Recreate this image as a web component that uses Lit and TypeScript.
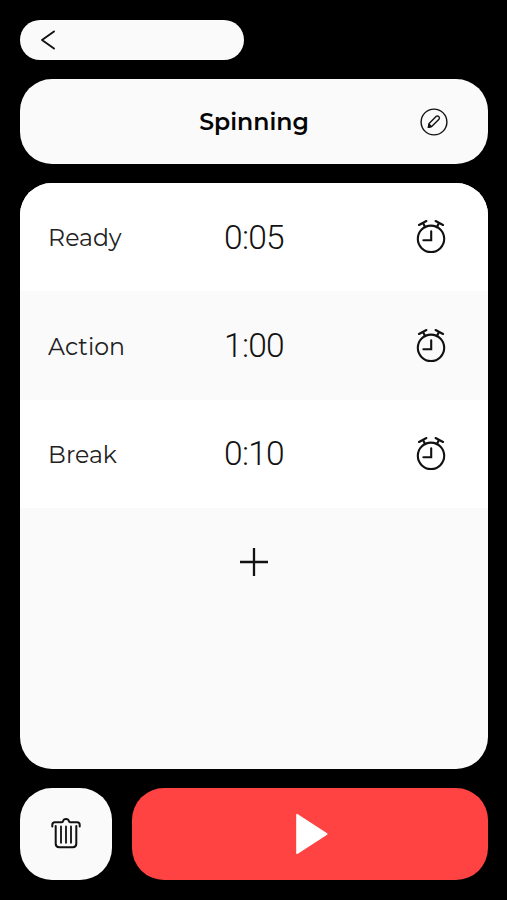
import { LitElement, html, css, svg } from "lit";
import { customElement, property } from "lit/decorators.js";

interface Step {
  name: string;
  time: string;
}

const steps: Step[] = [
  { name: "Ready", time: "0:05" },
  { name: "Action", time: "1:00" },
  { name: "Break", time: "0:10" },
];

const icons: Record<string, { w: number; h: number; body: unknown }> = {
  back: {
    w: 16, h: 22,
    body: svg`<path d="M14 2.4 2 11 14 19.6" stroke-width="1.9"/>`,
  },
  edit: {
    w: 28, h: 28,
    body: svg`<circle cx="14" cy="14" r="12.9" stroke-width="1.4"/>
      <path d="M8.4 19.3 9.1 15.5 16.3 8.3Q17.5 7.4 18.7 8.6 20 9.9 19 11.2L11.9 18.3Z" stroke-width="1.4"/>
      <path d="M8.4 19.3 9.1 16.3 11.4 18.5Z" stroke-width="1.4" fill="currentColor"/>`,
  },
  alarm: {
    w: 30, h: 36,
    body: svg`<circle cx="15" cy="20.8" r="13.2" stroke-width="2.1"/>
      <path d="M15.2 13.2V22.2H7.4" stroke-width="2.1" stroke-linejoin="miter"/>
      <path d="M3 6.9 10.4 3.1M7 5.1 9.1 9M27 6.9 19.6 3.1M23 5.1 20.9 9" stroke-width="2.2"/>`,
  },
  plus: {
    w: 28, h: 28,
    body: svg`<path d="M14 0V28M0 14H28" stroke-width="2.3" stroke-linecap="butt"/>`,
  },
  trash: {
    w: 30, h: 32,
    body: svg`<path d="M1.3 9.6V7.7Q1.3 5.2 3.8 5.2H10.9Q11.8 5.2 12 4.2 12.6 2 15 2T18 4.2Q18.2 5.2 19.1 5.2H26.2Q28.7 5.2 28.7 7.7V9.6" stroke-width="2"/>
      <path d="M4.7 9V26.8Q4.7 30.2 8.2 30.2H21.8Q25.3 30.2 25.3 26.8V9" stroke-width="2"/>
      <path d="M10 9.5V25.8M15 9.5V25.8M20 9.5V25.8" stroke-width="1.8"/>`,
  },
  play: {
    w: 34, h: 42,
    body: svg`<path d="M2 1.7V40.3L31.7 21Z" fill="currentColor" stroke-width="1.6"/>`,
  },
};

@customElement("line-icon")
export class LineIcon extends LitElement {
  @property() name = "back";

  static styles = css`
    :host { display: block; flex: none; }
    .glyph {
      display: block;
      fill: none;
      stroke: currentColor;
      stroke-linecap: round;
      stroke-linejoin: round;
    }
  `;

  render() {
    const icon = icons[this.name];
    return html`<svg class="glyph" width=${icon.w} height=${icon.h}
      viewBox="0 0 ${icon.w} ${icon.h}">${icon.body}</svg>`;
  }
}

@customElement("app-root")
export class AppRoot extends LitElement {
  static styles = css`
    :host {
      display: flex;
      flex-direction: column;
      gap: 18.8px;
      box-sizing: border-box;
      width: 100%;
      height: 900px;
      padding: 19.5px 18.6px 20px 19.6px;
      background: #000;
      color: #111;
      font-family: Montserrat, Inter, sans-serif;
    }
    button {
      appearance: none;
      border: 0;
      margin: 0;
      padding: 0;
      color: inherit;
      font: inherit;
      background: #fafafa;
    }
    .back {
      display: flex;
      align-items: center;
      width: 224.4px;
      height: 40.7px;
      padding-left: 20.4px;
      border-radius: 21px;
    }
    .title {
      display: grid;
      grid-template-columns: 1fr auto 1fr;
      align-items: center;
      height: 85.4px;
      box-sizing: border-box;
      padding: 0 40.4px;
      border-radius: 32px;
      background: #fafafa;
    }
    .heading {
      grid-column: 2;
      margin: 0;
      font-size: 23.6px;
      font-weight: 600;
      line-height: 29px;
      color: #050505;
    }
    .edit {
      justify-self: end;
      background: none;
    }
    .steps {
      flex: 1;
      overflow: hidden;
      border-radius: 32px;
      background: #fafafa;
    }
    .step {
      display: grid;
      grid-template-columns: 1fr auto 1fr;
      align-items: center;
      height: 108.2px;
      box-sizing: border-box;
      padding: 0 42.5px 0 28.5px;
      background: #fff;
    }
    .step:nth-child(even) { background: #fafafa; }
    .name {
      padding-top: 1.4px;
      font-size: 23.6px;
      font-weight: 400;
      color: #222;
    }
    .time {
      font-family: Roboto, sans-serif;
      font-size: 33.5px;
      font-weight: 300;
      letter-spacing: -0.7px;
      margin-left: 14px;
    }
    .step line-icon {
      justify-self: end;
      margin-bottom: 1.6px;
    }
    .add {
      display: grid;
      place-items: center;
      width: 100%;
      height: 108px;
    }
    .actions {
      display: flex;
      gap: 20.3px;
      height: 92px;
    }
    .action {
      display: grid;
      place-items: center;
      border-radius: 32px;
    }
    .remove { width: 92px; }
    .remove line-icon { margin-bottom: 2px; }
    .start {
      flex: 1;
      padding-left: 4px;
      background: #ff4343;
      color: #fff;
    }
  `;

  render() {
    return html`
      <button class="back" aria-label="Back"><line-icon name="back"></line-icon></button>
      <header class="title">
        <h1 class="heading">Spinning</h1>
        <button class="edit" aria-label="Edit"><line-icon name="edit"></line-icon></button>
      </header>
      <main class="steps">
        ${steps.map(
          (s) => html`<div class="step">
            <span class="name">${s.name}</span>
            <span class="time">${s.time}</span>
            <line-icon name="alarm"></line-icon>
          </div>`
        )}
        <button class="add" aria-label="Add"><line-icon name="plus"></line-icon></button>
      </main>
      <footer class="actions">
        <button class="action remove" aria-label="Delete"><line-icon name="trash"></line-icon></button>
        <button class="action start" aria-label="Start"><line-icon name="play"></line-icon></button>
      </footer>
    `;
  }
}
